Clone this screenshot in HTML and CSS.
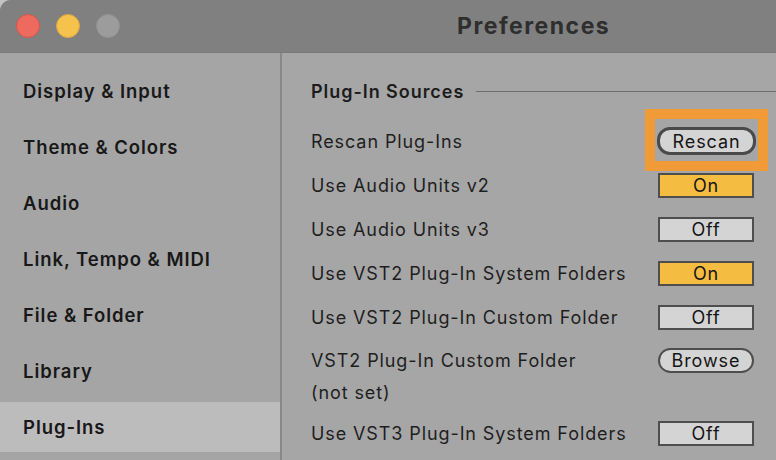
FILE: index.html
```html
<!DOCTYPE html>
<html>
<head>
<meta charset="utf-8">
<link rel="stylesheet" href="styles.css">
</head>
<body>
<div class="window">
  <header class="titlebar">
    <div class="lights">
      <span class="light red"></span>
      <span class="light yellow"></span>
      <span class="light gray"></span>
    </div>
    <div class="title">Preferences</div>
  </header>
  <div class="main">
    <nav class="sidebar">
      <div class="nav-item">Display &amp; Input</div>
      <div class="nav-item">Theme &amp; Colors</div>
      <div class="nav-item">Audio</div>
      <div class="nav-item">Link, Tempo &amp; MIDI</div>
      <div class="nav-item">File &amp; Folder</div>
      <div class="nav-item">Library</div>
      <div class="nav-item selected">Plug-Ins</div>
    </nav>
    <div class="divider"></div>
    <section class="panel">
      <div class="section-head">
        <span class="section-title">Plug-In Sources</span>
        <span class="section-rule"></span>
      </div>
      <div class="rows">
        <div class="row">
          <span class="label">Rescan Plug-Ins</span>
          <span class="ctl">
            <span class="pill strong">Rescan</span>
            <span class="highlight"></span>
          </span>
        </div>
        <div class="row">
          <span class="label">Use Audio Units v2</span>
          <span class="ctl"><span class="toggle on">On</span></span>
        </div>
        <div class="row">
          <span class="label">Use Audio Units v3</span>
          <span class="ctl"><span class="toggle">Off</span></span>
        </div>
        <div class="row">
          <span class="label">Use VST2 Plug-In System Folders</span>
          <span class="ctl"><span class="toggle on">On</span></span>
        </div>
        <div class="row">
          <span class="label">Use VST2 Plug-In Custom Folder</span>
          <span class="ctl"><span class="toggle">Off</span></span>
        </div>
        <div class="row tall">
          <div class="label-block">
            <div class="label">VST2 Plug-In Custom Folder</div>
            <div class="sub">(not set)</div>
          </div>
          <span class="ctl"><span class="pill">Browse</span></span>
        </div>
        <div class="row">
          <span class="label">Use VST3 Plug-In System Folders</span>
          <span class="ctl"><span class="toggle">Off</span></span>
        </div>
      </div>
    </section>
  </div>
</div>
</body>
</html>
```

FILE: styles.css
```css
* { box-sizing: border-box; }
html, body {
  margin: 0;
  padding: 0;
}
body {
  width: 776px;
  height: 460px;
  overflow: hidden;
  background: #c4c4c4;
  font-family: "Inter", "Liberation Sans", sans-serif;
  color: #1c1c1c;
}
.window {
  width: 776px;
  height: 460px;
  border-top-left-radius: 11px;
  overflow: hidden;
  background: #a6a6a6;
}
.titlebar {
  height: 53px;
  background: #808080;
  display: flex;
  align-items: center;
  border-bottom: 1px solid #7a7a7a;
}
.lights {
  display: flex;
  gap: 16px;
  padding-left: 16px;
}
.light {
  width: 24px;
  height: 24px;
  border-radius: 50%;
  display: block;
}
.red { background: #ee6a5e; border: 1px solid #d3564c; }
.yellow { background: #f5c24e; border: 1px solid #d9a53c; }
.gray { background: #9c9c9c; border: 1px solid #929292; }
.title {
  margin-left: 337px;
  font-size: 23px;
  font-weight: 700;
  color: #2e2e2e;
  letter-spacing: 1.5px;
  margin-top: -1px;
}
.main {
  display: grid;
  grid-template-columns: 280px 2px 1fr;
  height: 407px;
}
.sidebar {
  background: #a5a5a5;
  padding-top: 13px;
  display: flex;
  flex-direction: column;
  gap: 6px;
}
.nav-item {
  height: 50px;
  display: flex;
  align-items: center;
  padding-left: 23px;
  font-size: 18.5px;
  font-weight: 600;
  letter-spacing: 0.95px;
  color: #181818;
}
.nav-item.selected {
  background: #bcbcbc;
}
.divider {
  background: #888888;
}
.panel {
  background: #a6a6a6;
  padding: 13px 0 0 29px;
}
.section-head {
  height: 50px;
  display: flex;
  align-items: center;
  gap: 12px;
}
.section-title {
  font-size: 18px;
  font-weight: 600;
  letter-spacing: 0.95px;
  color: #1c1c1c;
}
.section-rule {
  flex: 1;
  height: 1px;
  background: #6e6e6e;
}
.rows {
  margin-top: 3px;
  display: flex;
  flex-direction: column;
}
.row {
  height: 44px;
  display: flex;
  align-items: center;
  justify-content: space-between;
  padding-right: 22px;
}
.row.tall {
  height: 72px;
  align-items: flex-start;
}
.row.tall .ctl { margin-top: 9px; }
.label {
  font-size: 18px;
  letter-spacing: 0.9px;
  color: #1e1e1e;
}
.label-block .label {
  line-height: 44px;
}
.sub {
  font-size: 18px;
  line-height: 20px;
  letter-spacing: 0.9px;
  color: #1e1e1e;
}
.ctl {
  position: relative;
  display: flex;
}
.toggle, .pill {
  width: 96px;
  height: 25px;
  display: flex;
  align-items: center;
  justify-content: center;
  font-size: 18px;
  letter-spacing: 0.9px;
  color: #151515;
  background: #d4d4d4;
  border: 2px solid #4e4e4e;
}
.toggle.on {
  background: #f4bd42;
}
.pill {
  border-radius: 13px;
}
.pill.strong {
  width: 99px;
  height: 28px;
  border: 3px solid #4a4a4a;
  margin-right: -2px;
}
.highlight {
  position: absolute;
  left: -12px;
  top: -18px;
  width: 123px;
  height: 62px;
  border: 10px solid #f09a38;
}
```
